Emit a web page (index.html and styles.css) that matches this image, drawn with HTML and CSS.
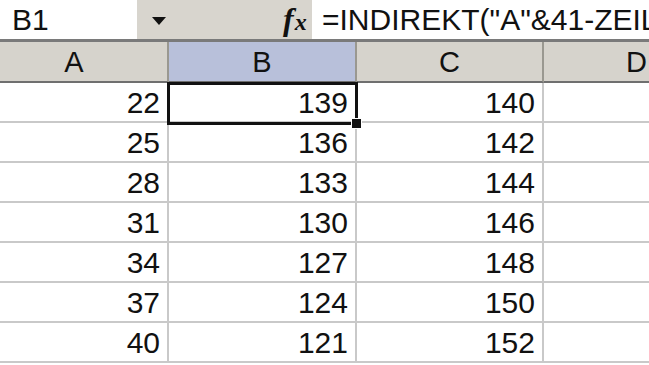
FILE: index.html
```html
<!DOCTYPE html>
<html>
<head>
<meta charset="utf-8">
<link rel="stylesheet" href="styles.css">
</head>
<body>
<div class="app">
  <div class="formula-bar">
    <div class="namebox">B1</div>
    <div class="tools">
      <span class="arrow"></span>
      <span class="fx"><i>f</i><i class="x">x</i></span>
    </div>
    <div class="formula">=INDIREKT("A"&amp;41-ZEILE())</div>
  </div>
  <div class="sheet">
    <div class="grid">
      <div class="hdr">A</div>
      <div class="hdr sel">B</div>
      <div class="hdr">C</div>
      <div class="hdr last">D</div>

      <div class="cell">22</div><div class="cell">139</div><div class="cell">140</div><div class="cell last"></div>
      <div class="cell">25</div><div class="cell">136</div><div class="cell">142</div><div class="cell last"></div>
      <div class="cell">28</div><div class="cell">133</div><div class="cell">144</div><div class="cell last"></div>
      <div class="cell">31</div><div class="cell">130</div><div class="cell">146</div><div class="cell last"></div>
      <div class="cell">34</div><div class="cell">127</div><div class="cell">148</div><div class="cell last"></div>
      <div class="cell">37</div><div class="cell">124</div><div class="cell">150</div><div class="cell last"></div>
      <div class="cell">40</div><div class="cell">121</div><div class="cell">152</div><div class="cell last"></div>
    </div>
    <div class="selection"><span class="handle"></span></div>
  </div>
</div>
</body>
</html>
```
FILE: styles.css
```css
html, body {
  margin: 0;
  padding: 0;
  background: #ffffff;
  overflow: hidden;
}
.app {
  width: 649px;
  height: 365px;
  font-family: "Liberation Sans", Arial, sans-serif;
  color: #111;
  overflow: hidden;
}
.formula-bar {
  display: flex;
  height: 39px;
  border-bottom: 3px solid #7a7a7a;
}
.namebox {
  width: 125px;
  padding-left: 12px;
  background: #fff;
  font-size: 30px;
  line-height: 39px;
}
.tools {
  width: 175px;
  background: #d8d5ce;
  position: relative;
}
.arrow {
  position: absolute;
  left: 15px;
  top: 17px;
  width: 0;
  height: 0;
  border-left: 7px solid transparent;
  border-right: 7px solid transparent;
  border-top: 8px solid #111;
}
.fx {
  position: absolute;
  left: 146px;
  top: 0;
  line-height: 39px;
  font-family: "Liberation Serif", "Times New Roman", serif;
  font-weight: bold;
  font-size: 32px;
  white-space: nowrap;
}
.fx i { font-style: italic; }
.fx .x { font-size: 24px; margin-left: 1px; }
.formula {
  flex: 1;
  background: #fff;
  padding-left: 10px;
  font-size: 30px;
  line-height: 39px;
  white-space: nowrap;
  overflow: hidden;
}
.sheet {
  position: relative;
  margin-left: -19px;
}
.grid {
  display: grid;
  grid-template-columns: 188px 188px 187px 187px;
  grid-template-rows: 41px repeat(7, 40px);
}
.hdr {
  background: #d6d3cc;
  border-right: 2px solid #9a9890;
  border-bottom: 2px solid #6f6f6f;
  text-align: center;
  font-size: 29px;
  line-height: 41px;
  box-sizing: border-box;
}
.hdr.sel {
  background: #b8c0da;
}
.cell {
  border-right: 2px solid #c9c9c9;
  border-bottom: 2px solid #c9c9c9;
  box-sizing: border-box;
  text-align: right;
  padding-right: 7px;
  font-size: 30px;
  line-height: 40px;
}
.selection {
  position: absolute;
  left: 186px;
  top: 40px;
  width: 191px;
  height: 43px;
  border: 3px solid #111;
  box-sizing: border-box;
}
.handle {
  position: absolute;
  right: -7px;
  bottom: -7px;
  width: 9px;
  height: 9px;
  background: #111;
  border: 1px solid #fff;
}
```
